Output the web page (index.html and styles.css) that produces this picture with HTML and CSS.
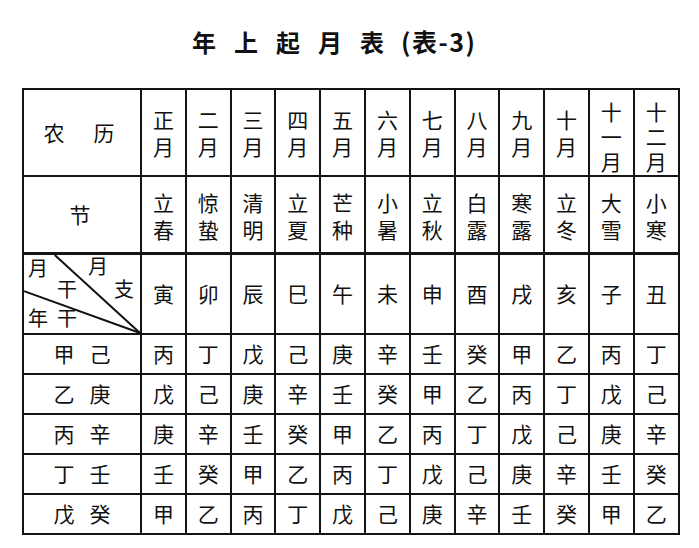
FILE: index.html
```html
<!DOCTYPE html>
<html lang="zh">
<head>
<meta charset="utf-8">
<link rel="stylesheet" href="styles.css">
</head>
<body>
<h1 class="title"><span class="title-main">年上起月表</span><span class="title-sub">(表-3)</span></h1>
<table class="grid">
  <colgroup>
    <col class="c-label">
    <col span="12" class="c-month">
  </colgroup>
  <tr class="r-head">
    <td class="label label-wide">农<span class="gap"></span>历</td>
    <td>正<br>月</td><td>二<br>月</td><td>三<br>月</td><td>四<br>月</td><td>五<br>月</td><td>六<br>月</td>
    <td>七<br>月</td><td>八<br>月</td><td>九<br>月</td><td>十<br>月</td>
    <td class="three">十<br>一<br>月</td><td class="three">十<br>二<br>月</td>
  </tr>
  <tr class="r-jie">
    <td class="label label-jie">节</td>
    <td>立<br>春</td><td>惊<br>蛰</td><td>清<br>明</td><td>立<br>夏</td><td>芒<br>种</td><td>小<br>暑</td>
    <td>立<br>秋</td><td>白<br>露</td><td>寒<br>露</td><td>立<br>冬</td><td>大<br>雪</td><td>小<br>寒</td>
  </tr>
  <tr class="r-zhi">
    <td class="diag-cell">
      <div class="diag">
        <svg class="diag-lines" viewBox="0 0 117 80" preserveAspectRatio="none">
          <line x1="31" y1="0" x2="117" y2="80"/>
          <line x1="0" y1="37" x2="117" y2="80"/>
        </svg>
        <span class="d d-yue1">月</span>
        <span class="d d-gan">干</span>
        <span class="d d-yue2">月</span>
        <span class="d d-zhi">支</span>
        <span class="d d-nian">年干</span>
      </div>
    </td>
    <td>寅</td><td>卯</td><td>辰</td><td>巳</td><td>午</td><td>未</td>
    <td>申</td><td>酉</td><td>戌</td><td>亥</td><td>子</td><td>丑</td>
  </tr>
  <tr class="r-row">
    <td class="label">甲<span class="gap-s"></span>己</td>
    <td>丙</td><td>丁</td><td>戊</td><td>己</td><td>庚</td><td>辛</td><td>壬</td><td>癸</td><td>甲</td><td>乙</td><td>丙</td><td>丁</td>
  </tr>
  <tr class="r-row">
    <td class="label">乙<span class="gap-s"></span>庚</td>
    <td>戊</td><td>己</td><td>庚</td><td>辛</td><td>壬</td><td>癸</td><td>甲</td><td>乙</td><td>丙</td><td>丁</td><td>戊</td><td>己</td>
  </tr>
  <tr class="r-row">
    <td class="label">丙<span class="gap-s"></span>辛</td>
    <td>庚</td><td>辛</td><td>壬</td><td>癸</td><td>甲</td><td>乙</td><td>丙</td><td>丁</td><td>戊</td><td>己</td><td>庚</td><td>辛</td>
  </tr>
  <tr class="r-row">
    <td class="label">丁<span class="gap-s"></span>壬</td>
    <td>壬</td><td>癸</td><td>甲</td><td>乙</td><td>丙</td><td>丁</td><td>戊</td><td>己</td><td>庚</td><td>辛</td><td>壬</td><td>癸</td>
  </tr>
  <tr class="r-row">
    <td class="label">戊<span class="gap-s"></span>癸</td>
    <td>甲</td><td>乙</td><td>丙</td><td>丁</td><td>戊</td><td>己</td><td>庚</td><td>辛</td><td>壬</td><td>癸</td><td>甲</td><td>乙</td>
  </tr>
</table>
</body>
</html>
```
FILE: styles.css
```css
html, body {
  margin: 0;
  padding: 0;
  background: #ffffff;
}
body {
  font-family: "Noto Sans CJK SC", "Noto Sans", sans-serif;
  color: #111;
  width: 699px;
  height: 548px;
  overflow: hidden;
}
.title {
  margin: 0;
  padding: 29px 0 0 192px;
  height: 25px;
  line-height: 25px;
  font-size: 24px;
  font-weight: 700;
  margin-bottom: 34px;
  white-space: nowrap;
}
.title-main {
  letter-spacing: 18px;
}
.title-sub {
  font-size: 25px;
  letter-spacing: 1.5px;
  margin-left: -1px;
}
.grid {
  margin-left: 22px;
  border-collapse: collapse;
  table-layout: fixed;
  width: 656px;
  border: 2px solid #111;
}
.c-label { width: 118px; }
.c-month { width: 44.8px; }
.grid td {
  border: 2px solid #141414;
  padding: 0;
  text-align: center;
  vertical-align: middle;
  font-size: 21px;
  line-height: 27px;
}
.r-head { height: 87px; }
.r-head td.three { line-height: 25px; padding-top: 7px; }
.r-jie { height: 77px; }
.r-jie td { border-bottom-width: 3px; padding-top: 3px; }
.r-zhi { height: 80px; }
.r-row { height: 40px; }
.grid td.label { padding-right: 0; }
.grid td.label-wide { padding-right: 6px; padding-top: 0; }
.grid td.label-jie { padding-right: 4px; padding-top: 0; }
.gap { display: inline-block; width: 29px; }
.gap-s { display: inline-block; width: 15px; }
.diag-cell { position: relative; }
.diag {
  position: relative;
  height: 78px;
  width: 100%;
}
.diag-lines {
  position: absolute;
  left: 0;
  top: 0;
  width: 100%;
  height: 100%;
  overflow: visible;
}
.diag-lines line {
  stroke: #111;
  stroke-width: 2;
  vector-effect: non-scaling-stroke;
}
.grid .d {
  position: absolute;
  font-size: 20px;
  line-height: 20px;
}
.grid .d-yue1 { left: 4px; top: 3px; }
.grid .d-gan { left: 33px; top: 24px; }
.grid .d-yue2 { left: 64px; top: 1px; }
.grid .d-zhi { left: 90px; top: 24px; }
.grid .d-nian { left: 4px; top: 53px; letter-spacing: 9px; }
```
